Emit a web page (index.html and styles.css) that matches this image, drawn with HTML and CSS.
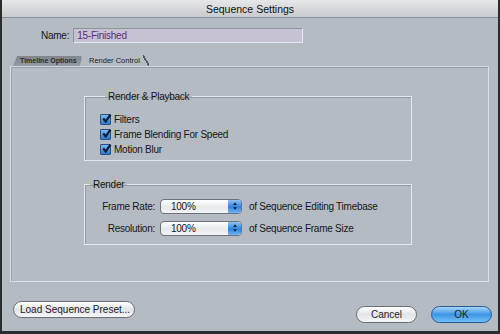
FILE: index.html
```html
<!DOCTYPE html>
<html>
  <head>
    <meta charset="utf-8">
    <title>Sequence Settings</title>
    <link rel="stylesheet" href="styles.css">
  </head>
  <body>
    <div class="window">
      <div class="titlebar">Sequence Settings</div>

      <div class="name-row">
        <label>Name:</label>
        <div class="name-field">15-Finished</div>
      </div>

      <div class="tabs">
        <div class="tab back">Timeline Options</div>
        <div class="tab front">Render Control</div>
        <span class="tab-edge"></span>
      </div>

      <div class="panel">
        <fieldset class="group playback">
          <legend>Render &amp; Playback</legend>
          <div class="check"><span class="box"><svg viewBox="0 0 10 10"><path d="M2 5 L4.3 7.6 L8.6 1.4" /></svg></span>Filters</div>
          <div class="check"><span class="box"><svg viewBox="0 0 10 10"><path d="M2 5 L4.3 7.6 L8.6 1.4" /></svg></span>Frame Blending For Speed</div>
          <div class="check"><span class="box"><svg viewBox="0 0 10 10"><path d="M2 5 L4.3 7.6 L8.6 1.4" /></svg></span>Motion Blur</div>
        </fieldset>

        <fieldset class="group render">
          <legend>Render</legend>
          <div class="row">
            <span class="lbl">Frame Rate:</span>
            <div class="popup"><span class="val">100%</span><span class="arrows"><svg viewBox="0 0 8 12"><path d="M4 1 L6.5 4.5 L1.5 4.5 Z M4 11 L6.5 7.5 L1.5 7.5 Z" /></svg></span></div>
            <span class="after">of Sequence Editing Timebase</span>
          </div>
          <div class="row">
            <span class="lbl">Resolution:</span>
            <div class="popup"><span class="val">100%</span><span class="arrows"><svg viewBox="0 0 8 12"><path d="M4 1 L6.5 4.5 L1.5 4.5 Z M4 11 L6.5 7.5 L1.5 7.5 Z" /></svg></span></div>
            <span class="after">of Sequence Frame Size</span>
          </div>
        </fieldset>
      </div>

      <div class="footer">
        <button class="btn preset">Load Sequence Preset...</button>
        <div class="right">
          <button class="btn">Cancel</button>
          <button class="btn ok">OK</button>
        </div>
      </div>
    </div>
  </body>
</html>
```

FILE: styles.css
```css
body {
    margin: 0;
    background: #2a2c2e;
    font-family: "Liberation Sans", Arial, sans-serif;
    font-size: 10px;
    letter-spacing: -0.25px;
    color: #15171a;
}

.window {
    width: 496px;
    height: 331px;
    margin-left: 2px;
    background: #b4bbc2;
    display: flex;
    flex-direction: column;
    overflow: hidden;
}

.titlebar {
    height: 17px;
    line-height: 18px;
    text-align: center;
    font-size: 10.5px;
    letter-spacing: 0;
    color: #111;
    background: linear-gradient(#e6e7e9, #c8cbcf);
    border-bottom: 1px solid #8d9298;
}

.name-row {
    display: flex;
    align-items: center;
    margin: 10px 0 0 39px;
}

.name-row label {
    margin-right: 4px;
}

.name-field {
    width: 225px;
    height: 13px;
    line-height: 13px;
    padding-left: 3px;
    color: #5a2a78;
    background: #c6c2d4;
    border: 1px solid #8f959c;
    border-right-color: #e4e8ec;
    border-bottom-color: #e4e8ec;
}

.tabs {
    display: flex;
    align-items: flex-end;
    margin: 13px 0 0 11px;
    height: 10px;
    font-size: 7.5px;
    letter-spacing: 0;
}

.tab {
    line-height: 10px;
    height: 10px;
}

.tab.back {
    width: 69px;
    box-sizing: border-box;
    padding-left: 7px;
    font-size: 7px;
    background: linear-gradient(#7f868d, #949ba2);
    color: #2a2e32;
    font-weight: bold;
    border-radius: 3px 2px 0 0;
    clip-path: polygon(4px 0, 100% 0, calc(100% - 2px) 100%, 0 100%);
}

.tab.front {
    padding: 0 0 0 7px;
    color: #222;
}

.tab-edge {
    width: 6px;
    height: 11px;
    margin-left: 3px;
    background: linear-gradient(to top right, transparent 42%, #565b60 42%, #565b60 58%, transparent 58%);
}

.panel {
    margin: 0 9px 0 8px;
    height: 216px;
    border: 1px solid #dbe0e5;
    border-top-color: #cfd4d9;
    box-shadow: inset 1px 1px 0 #9aa1a8;
    padding-top: 24px;
    box-sizing: border-box;
}

.group {
    margin: 0 0 0 73px;
    width: 328px;
    box-sizing: border-box;
    border: 1px solid #e3e7eb;
    box-shadow: inset 1px 1px 0 #949ba2;
    padding: 0;
}

.group legend {
    font-size: 10px;
    padding: 0 3px;
    margin-left: 5px;
}

.playback {
    height: 70px;
    padding: 10px 0 0 15px;
}

.check {
    display: flex;
    align-items: center;
    height: 15px;
}

.box {
    width: 9px;
    height: 9px;
    margin-right: 3px;
    border: 1px solid #2c4f86;
    border-radius: 1px;
    background: linear-gradient(#7ab8ef, #2c78d0);
    position: relative;
}

.box svg {
    position: absolute;
    left: 0;
    top: -2px;
    width: 11px;
    height: 11px;
}

.box path {
    fill: none;
    stroke: #0d1d33;
    stroke-width: 2;
}

.render {
    margin-top: 18px;
    height: 66px;
    padding: 5px 0 0 0;
}

.row {
    display: flex;
    align-items: center;
    height: 22px;
}

.lbl {
    width: 70px;
    text-align: right;
    margin-right: 5px;
}

.popup {
    display: flex;
    width: 82px;
    height: 15px;
    border: 1px solid #6d7378;
    border-radius: 4px;
    background: linear-gradient(#ffffff, #e6e8ea 55%, #f4f5f6);
    overflow: hidden;
    margin-right: 7px;
    box-sizing: border-box;
}

.popup .val {
    flex: 1;
    line-height: 13px;
    padding-left: 10px;
}

.arrows {
    width: 13px;
    background: linear-gradient(#8fc2f2, #2f82dc 55%, #6fb6f4);
    display: flex;
    align-items: center;
    justify-content: center;
}

.arrows svg {
    width: 6px;
    height: 10px;
}

.arrows path {
    fill: #0f1c2c;
}

.footer {
    display: flex;
    justify-content: space-between;
    align-items: flex-start;
    padding: 19px 6px 0 11px;
}

.right {
    display: flex;
    gap: 14px;
    margin-top: 5px;
}

.btn {
    font-family: "Liberation Sans", Arial, sans-serif;
    font-size: 10px;
    white-space: nowrap;
    height: 17px;
    padding: 0 6px;
    border: 1px solid #6a6f74;
    border-radius: 9px;
    background: linear-gradient(#ffffff, #e2e4e6 50%, #f6f7f8);
    color: #1e2022;
}

.preset {
    width: 122px;
}

.right .btn {
    width: 61px;
}

.btn.ok {
    background: linear-gradient(#a7d6fa, #3d95e4 50%, #6fc0f8);
    border-color: #2a5a94;
}
```
